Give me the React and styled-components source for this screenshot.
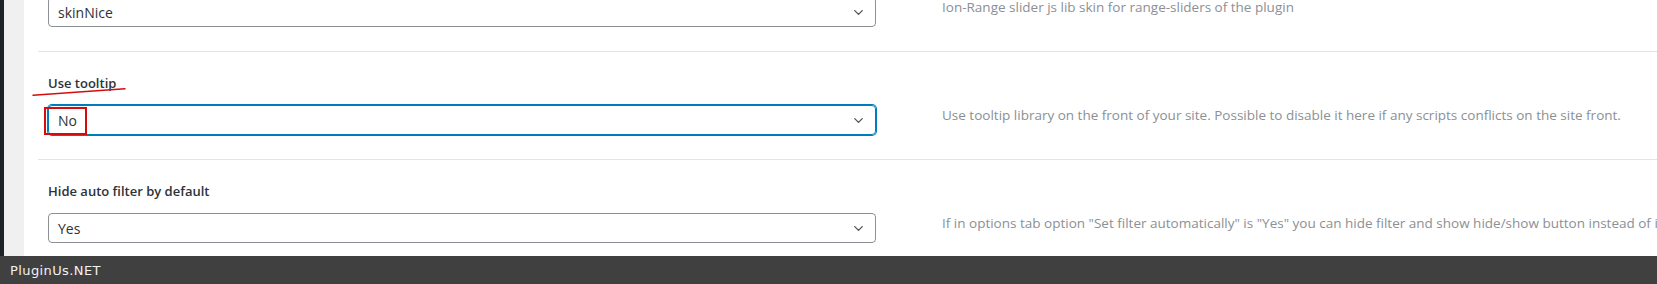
import styled, { createGlobalStyle } from "styled-components";
import { ChevronDown } from "lucide-react";

const GlobalStyle = createGlobalStyle`
    html, body{
        margin: 0;
        padding: 0;
        background: #FFFFFF;
    }
    *{
        box-sizing: border-box;
    }
`;

const StyledPage = styled.div`
    width: 1657px;
    height: 284px;
    display: flex;
    flex-direction: column;
    overflow: hidden;
    font-family: "Open Sans", "Noto Sans", sans-serif;

    .page-body{
        flex: 1;
        display: flex;
        min-height: 0;
    }
    .admin-menu{
        width: 4px;
        background: #1D2327;
    }
    .gutter{
        width: 20px;
        background: #F0F0F1;
    }
    .content{
        flex: 1;
        min-width: 0;
        background: #FFFFFF;
        overflow: hidden;
    }
    .rows{
        margin-top: -56px;
    }
`;

const Row = styled.div`
    position: relative;
    margin-left: 14px;
    padding: 21px 0 24px 10px;
    border-bottom: 1px solid #E2E4E7;
    display: grid;
    grid-template-columns: 828px 1fr;
    grid-template-rows: 20px 30px;
    column-gap: 66px;
    row-gap: 12px;
    white-space: nowrap;
`;

const Label = styled.div`
    grid-column: 1;
    grid-row: 1;
    font-size: 13px;
    line-height: 20px;
    font-weight: 600;
    color: #2C3338;
`;

const SelectBox = styled.div`
    position: relative;
    grid-column: 1;
    grid-row: 2;
    display: flex;
    align-items: center;
    justify-content: space-between;
    height: 30px;
    padding: 0 9px 0 9px;
    border: 1px solid ${({ $focus }) => ($focus ? "#007CBA" : "#8C8F94")};
    box-shadow: ${({ $focus }) => ($focus ? "0 0 0 1px #007CBA" : "none")};
    border-radius: 4px;
    font-size: 14px;
    color: #2C3338;
    svg{
        color: #50575E;
    }
`;

const Description = styled.div`
    grid-column: 2;
    grid-row: 2;
    align-self: start;
    font-size: 13.5px;
    line-height: 20px;
    color: #8C8F94;
`;

const Marker = styled.span`
    position: absolute;
    left: -5px;
    top: 1px;
    width: 43px;
    height: 28px;
    border: 2px solid #D60C0C;
`;

const Scribble = styled.svg`
    position: absolute;
    left: -6px;
    top: 36px;
    overflow: visible;
`;

const Footer = styled.div`
    height: 28px;
    flex-shrink: 0;
    display: flex;
    align-items: center;
    padding-left: 10px;
    background: #404040;
    color: #F2F2F2;
    font-family: "DejaVu Sans", sans-serif;
    font-size: 13px;
    letter-spacing: 0.4px;
`;

const options = [
    {
        label: "Select range-slider skin",
        value: "skinNice",
        text: "Ion-Range slider js lib skin for range-sliders of the plugin",
    },
    {
        label: "Use tooltip",
        value: "No",
        text: "Use tooltip library on the front of your site. Possible to disable it here if any scripts conflicts on the site front.",
        focus: true,
        marked: true,
    },
    {
        label: "Hide auto filter by default",
        value: "Yes",
        text: "If in options tab option \"Set filter automatically\" is \"Yes\" you can hide filter and show hide/show button instead of it.",
    },
];

export default function App() {
    return <>
        <GlobalStyle />
        <StyledPage>
            <div className="page-body">
                <div className="admin-menu" />
                <div className="gutter" />
                <div className="content">
                    <div className="rows">
                        {options.map((opt) => (
                            <Row key={opt.label}>
                                <Label>{opt.label}</Label>
                                {opt.marked && (
                                    <Scribble width="94" height="8" viewBox="0 0 94 8">
                                        <path d="M1 7.2 L93 0.8" stroke="#D60C0C" strokeWidth="1.4" fill="none" strokeLinecap="round" />
                                    </Scribble>
                                )}
                                <SelectBox $focus={opt.focus}>
                                    <span>{opt.value}</span>
                                    <ChevronDown size={15} strokeWidth={2.2} />
                                    {opt.marked && <Marker />}
                                </SelectBox>
                                <Description>{opt.text}</Description>
                            </Row>
                        ))}
                    </div>
                </div>
            </div>
            <Footer>PluginUs.NET</Footer>
        </StyledPage>
    </>
}
